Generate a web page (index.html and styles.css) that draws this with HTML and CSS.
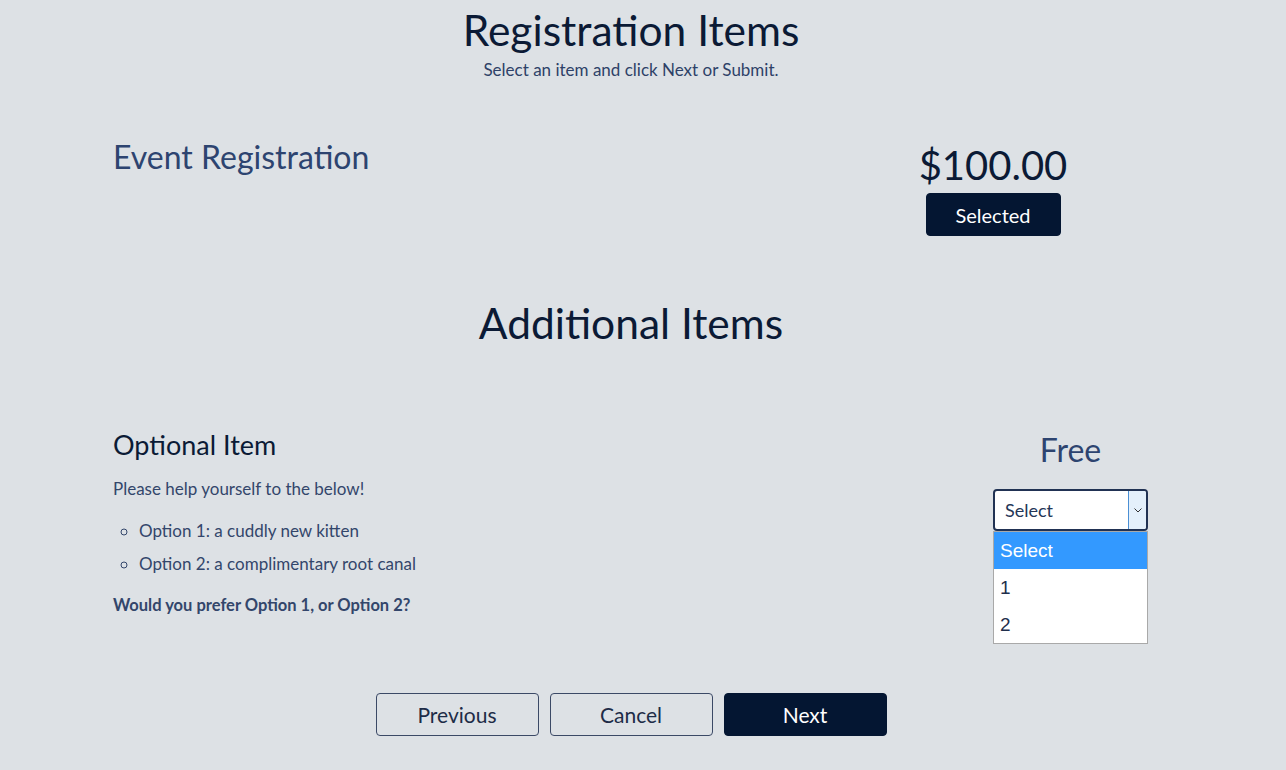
FILE: index.html
```html
<!DOCTYPE html>
<html lang="en">
<head>
    <meta charset="UTF-8">
    <title>Registration Items</title>
    <link rel="stylesheet" href="styles.css">
</head>
<body>

<div class="page">
    <header class="page-head">
        <h1>Registration Items</h1>
        <p class="hint">Select an item and click Next or Submit.</p>
    </header>

    <section class="item-row main-item">
        <h2 class="item-name">Event Registration</h2>
        <div class="price-box">
            <div class="price">$100.00</div>
            <button class="btn btn-dark btn-selected">Selected</button>
        </div>
    </section>

    <h1 class="section-title">Additional Items</h1>

    <section class="item-row extra-item">
        <div class="item-info">
            <h3>Optional Item</h3>
            <p>Please help yourself to the below!</p>
            <ul>
                <li>Option 1: a cuddly new kitten</li>
                <li>Option 2: a complimentary root canal</li>
            </ul>
            <p class="question">Would you prefer Option 1, or Option 2?</p>
        </div>
        <div class="qty-box">
            <div class="price-free">Free</div>
            <div class="select-wrap">
                <div class="select-box">
                    <span>Select</span>
                    <span class="select-arrow">
                        <svg width="8" height="5" viewBox="0 0 8 5"><path d="M0.5 0.5 L4 4 L7.5 0.5" fill="none" stroke="#333" stroke-width="1"/></svg>
                    </span>
                </div>
                <!-- open option list -->
                <ul class="option-list">
                    <li class="active">Select</li>
                    <li>1</li>
                    <li>2</li>
                </ul>
            </div>
        </div>
    </section>

    <div class="actions">
        <button class="btn btn-light">Previous</button>
        <button class="btn btn-light">Cancel</button>
        <button class="btn btn-dark">Next</button>
    </div>
</div>

</body>
</html>
```

FILE: styles.css
```css
body {
    margin: 0;
    background: #dde1e5;
    font-family: 'Lato', sans-serif;
    color: #33466b;
}

.page {
    width: 1036px;
    margin-left: 113px;
}

/* Header */
.page-head {
    text-align: center;
    padding-top: 6px;
}

h1 {
    font-size: 42.5px;
    font-weight: 400;
    color: #0b1a35;
    margin: 0;
    line-height: 48px;
}

.hint {
    margin: 6px 0 0;
    font-size: 17px;
    line-height: 20px;
    color: #2e4168;
}

/* Item rows */
.item-row {
    display: flex;
    justify-content: space-between;
}

.main-item {
    margin-top: 49px;
}

.item-name {
    margin: 8px 0 0;
    font-size: 32px;
    font-weight: 400;
    color: #2d4470;
    line-height: 40px;
}

.price-box {
    width: 200px;
    margin-right: 56px;
    padding-top: 11px;
    text-align: center;
}

.price {
    font-size: 40px;
    line-height: 50px;
    color: #0b1a35;
}

.btn {
    font-family: inherit;
    font-size: 21px;
    border-radius: 4px;
    cursor: pointer;
    height: 43px;
}

.btn-dark {
    background: #041632;
    color: #ffffff;
    border: 1px solid #041632;
}

.btn-light {
    background: transparent;
    color: #1d2c47;
    border: 1px solid #3b4966;
}

.btn-selected {
    width: 135px;
    margin-top: 3px;
    font-size: 20px;
}

.section-title {
    text-align: center;
    margin-top: 63px;
}

/* Additional item */
.extra-item {
    margin-top: 81px;
}

.item-info h3 {
    margin: 0;
    font-size: 27px;
    font-weight: 400;
    line-height: 34px;
    color: #0b1a35;
}

.item-info p {
    margin: 17px 0 0;
    font-size: 17px;
    line-height: 20px;
}

.item-info ul {
    margin: 15px 0 0;
    padding-left: 26px;
    list-style: circle;
    font-size: 17px;
    line-height: 33px;
}

.item-info .question {
    margin-top: 15px;
    font-weight: 700;
    font-size: 16.5px;
}

.qty-box {
    width: 155px;
    margin-right: 1px;
    text-align: center;
}

.price-free {
    font-size: 32px;
    line-height: 40px;
    margin-top: 2px;
    color: #2d4470;
}

.select-wrap {
    position: relative;
    margin-top: 19px;
}

.select-box {
    height: 38px;
    border: 2px solid #213253;
    border-radius: 4px;
    background: #ffffff;
    display: flex;
    align-items: center;
    justify-content: space-between;
    padding-left: 10px;
    font-size: 18px;
    color: #243657;
    text-align: left;
    overflow: hidden;
}

.select-arrow {
    width: 17px;
    height: 38px;
    background: #e4f0fb;
    border-left: 1px solid #4b8fd4;
    display: flex;
    align-items: center;
    justify-content: center;
}

/* the opened list of the select */
.option-list {
    position: absolute;
    top: 42px;
    left: 0;
    width: 153px;
    margin: 0;
    padding: 0;
    list-style: none;
    background: #ffffff;
    border: 1px solid #a9a9a9;
    text-align: left;
    font-family: 'Liberation Sans', Arial, sans-serif;
    font-size: 19px;
    color: #1f2f4c;
}

.option-list li {
    height: 37px;
    line-height: 37px;
    padding-left: 6px;
}

.option-list li.active {
    background: #3399ff;
    color: #ffffff;
}

/* Bottom buttons */
.actions {
    display: flex;
    justify-content: center;
    gap: 11px;
    margin-top: 78px;
}

.actions .btn {
    width: 163px;
}
```
